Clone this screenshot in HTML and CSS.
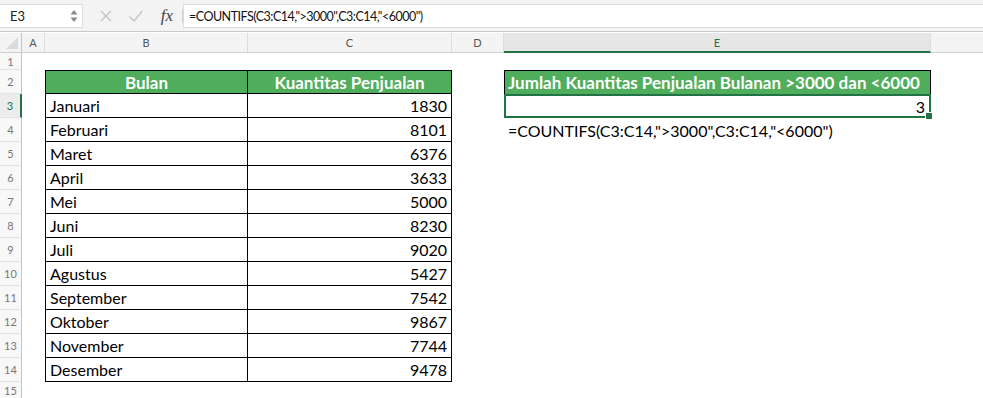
FILE: index.html
```html
<!DOCTYPE html>
<html lang="en">
<head>
    <meta charset="UTF-8">
    <title>COUNTIFS - Kuantitas Penjualan</title>
    <link rel="stylesheet" href="styles.css">
</head>
<body>
    <!-- formula bar -->
    <div class="formula-bar">
        <div class="name-box">
            <span>E3</span>
            <svg class="spin" width="8" height="16" viewBox="0 0 8 16">
                <path d="M4 2 L7.5 6.5 H0.5 Z" fill="#8a8a8a"/>
                <path d="M4 14 L7.5 9.5 H0.5 Z" fill="#8a8a8a"/>
            </svg>
        </div>
        <div class="bar-icons">
            <svg width="14" height="14" viewBox="0 0 14 14"><path d="M2 2 L12 12 M12 2 L2 12" stroke="#c4c4c4" stroke-width="1.4" fill="none"/></svg>
            <svg width="16" height="14" viewBox="0 0 16 14"><path d="M1.5 7.5 L6 12 L14.5 2" stroke="#c4c4c4" stroke-width="1.4" fill="none"/></svg>
            <span class="fx">fx</span>
        </div>
        <div class="formula-input">=COUNTIFS(C3:C14,"&gt;3000",C3:C14,"&lt;6000")</div>
    </div>

    <!-- sheet -->
    <div class="sheet" id="sheet">
        <div class="corner"><span class="tri"></span></div>
        <div class="col-head">A</div>
        <div class="col-head">B</div>
        <div class="col-head">C</div>
        <div class="col-head">D</div>
        <div class="col-head active">E</div>
        <div class="col-head last"></div>
    </div>

    <script>
        const months = [
            ["Januari", 1830], ["Februari", 8101], ["Maret", 6376], ["April", 3633],
            ["Mei", 5000], ["Juni", 8230], ["Juli", 9020], ["Agustus", 5427],
            ["September", 7542], ["Oktober", 9867], ["November", 7744], ["Desember", 9478]
        ];
        const sheet = document.getElementById('sheet');

        function addRow(num, cells) {
            let html = `<div class="row-head${num === 3 ? ' active' : ''}">${num}</div>`;
            cells.forEach(c => {
                html += `<div class="cell ${c.cls || ''}">${c.text || ''}</div>`;
            });
            sheet.insertAdjacentHTML('beforeend', html);
        }

        addRow(1, [{}, {}, {}, {}, {}, {}]);
        addRow(2, [{}, {cls: 'th first', text: 'Bulan'}, {cls: 'th', text: 'Kuantitas Penjualan'}, {},
            {cls: 'th-e', text: 'Jumlah Kuantitas Penjualan Bulanan &gt;3000 dan &lt;6000'}, {}]);

        months.forEach((m, i) => {
            const r = i + 3;
            let e = {};
            if (r === 3) e = {cls: 'selected', text: '3<span class="handle"></span>'};
            if (r === 4) e = {cls: 'note', text: '=COUNTIFS(C3:C14,"&gt;3000",C3:C14,"&lt;6000")'};
            addRow(r, [{}, {cls: 'td first', text: m[0]}, {cls: 'td num', text: m[1]}, {}, e, {}]);
        });

        addRow(15, [{}, {}, {}, {}, {}, {}]);
    </script>
</body>
</html>
```

FILE: styles.css
```css
body {
    margin: 0;
    width: 983px;
    height: 398px;
    overflow: hidden;
    background: #fff;
    font-family: Lato, "Open Sans", sans-serif;
    color: #000;
}

/* formula bar */
.formula-bar {
    display: flex;
    align-items: stretch;
    height: 32px;
    padding: 4px 0 3px;
    box-sizing: border-box;
    background: #f3f3f3;
    border-bottom: 1px solid #c9c9c9;
}
.name-box {
    width: 83px;
    box-sizing: border-box;
    background: #fff;
    border: 1px solid #dcdcdc;
    border-left: none;
    display: flex;
    align-items: center;
    justify-content: space-between;
    padding: 0 3px 0 10px;
    font-size: 13px;
    color: #222;
}
.spin {
    margin-right: 1px;
}
.bar-icons {
    width: 100px;
    display: flex;
    align-items: center;
    gap: 15px;
    padding-left: 16px;
    box-sizing: border-box;
}
.fx {
    font-family: "Liberation Serif", serif;
    font-style: italic;
    font-size: 17px;
    color: #444;
    padding: 0 9px 0 2px;
    border-right: 1px solid #d0d0d0;
    line-height: 14px;
}
.formula-input {
    flex: 1;
    background: #fff;
    border: 1px solid #dcdcdc;
    border-right: none;
    display: flex;
    align-items: center;
    padding-left: 5px;
    font-size: 12.5px;
    letter-spacing: -0.5px;
    color: #111;
}

/* sheet grid */
.sheet {
    display: grid;
    grid-template-columns: 22px 23px 203px 204px 52px 427px 1fr;
    grid-template-rows: 20px 17px repeat(13, 24px) 1fr;
    height: 366px;
    margin-top: 1px;
}
.corner,
.col-head {
    background: #f4f4f4;
    border-bottom: 1px solid #cfcfcf;
    border-right: 1px solid #dcdcdc;
    box-sizing: border-box;
    display: flex;
    align-items: center;
    justify-content: center;
    font-size: 11px;
    color: #555;
}
.corner {
    position: relative;
    border-right: 1px solid #c4c4c4;
}
.tri {
    position: absolute;
    right: 3px;
    bottom: 3px;
    width: 0;
    height: 0;
    border-left: 12px solid transparent;
    border-bottom: 12px solid #dadada;
}
.col-head.active {
    background: #e6e6e6;
    color: #217346;
    border-bottom: 2px solid #217346;
}
.col-head.last {
    border-right: none;
}
.row-head {
    background: #f8f8f8;
    border-right: 1px solid #c4c4c4;
    border-bottom: 1px solid #e4e4e4;
    box-sizing: border-box;
    display: flex;
    align-items: center;
    justify-content: center;
    font-size: 11px;
    color: #777;
}
.row-head.active {
    color: #217346;
    border-right: 2px solid #217346;
    background: #ececec;
}

/* cells */
.cell {
    box-sizing: border-box;
    font-size: 16px;
    display: flex;
    align-items: center;
    white-space: nowrap;
}
.th,
.td {
    border-right: 1px solid #000;
    border-bottom: 1px solid #000;
}
.th.first,
.td.first {
    border-left: 1px solid #000;
}
.th {
    border-top: 1px solid #000;
    background: #4fad5b;
    color: #fff;
    font-weight: 700;
    font-size: 17px;
    justify-content: center;
}
.td {
    padding-left: 4px;
}
.td.num {
    justify-content: flex-end;
    padding-right: 4px;
}
.th-e {
    background: #4fad5b;
    color: #fff;
    font-weight: 700;
    font-size: 17px;
    border: 1px solid #000;
    border-bottom: none;
    padding-left: 3px;
    overflow: visible;
}
.selected {
    position: relative;
    border: 2px solid #217346;
    justify-content: flex-end;
    padding-right: 4px;
}
.handle {
    position: absolute;
    right: -4px;
    bottom: -4px;
    width: 6px;
    height: 6px;
    background: #217346;
    border: 1px solid #fff;
}
.note {
    padding-left: 4px;
    overflow: visible;
}
```
